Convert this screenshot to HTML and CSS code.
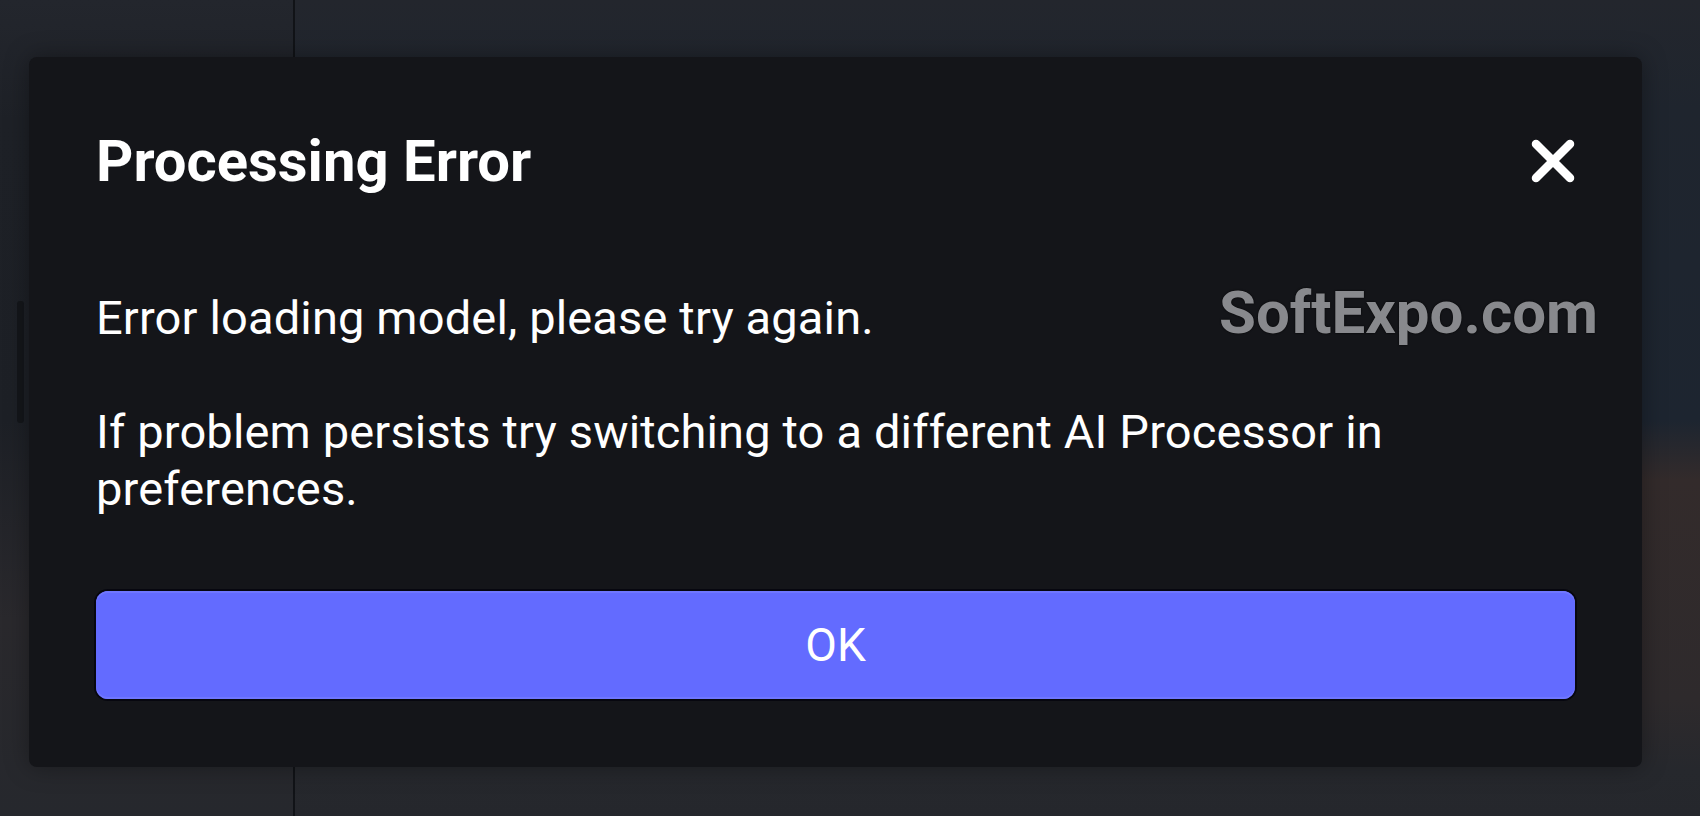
FILE: index.html
```html
<!DOCTYPE html>
<html lang="en">
<head>
<meta charset="utf-8">
<title>Processing Error</title>
<link rel="stylesheet" href="styles.css">
</head>
<body>
<div class="app">
  <aside class="sidebar"><div class="scroll-thumb"></div></aside>
  <main class="workspace"></main>
</div>
<div class="overlay">
  <div class="dialog" role="dialog" aria-labelledby="dlg-title">
    <div class="dialog-header">
      <h2 class="dialog-title" id="dlg-title">Processing Error</h2>
      <button class="close-btn" aria-label="Close">
        <svg viewBox="0 0 44 44" width="44" height="44" aria-hidden="true">
          <path d="M5 5 L39 39 M39 5 L5 39" stroke="#ffffff" stroke-width="8.5" stroke-linecap="round" fill="none"/>
        </svg>
      </button>
    </div>
    <div class="dialog-body">
      <p>Error loading model, please try again.</p>
      <p>If problem persists try switching to a different AI Processor in preferences.</p>
    </div>
    <button class="ok-btn">OK</button>
  </div>
</div>
<div class="watermark">SoftExpo.com</div>
</body>
</html>
```

FILE: styles.css
```css
* { box-sizing: border-box; }
html, body { margin: 0; height: 100%; }
body {
  font-family: Roboto, "Liberation Sans", sans-serif;
  background: #23262d;
  overflow: hidden;
  position: relative;
}
.app { display: flex; height: 100vh; }
.sidebar {
  width: 295px;
  flex: none;
  background: linear-gradient(to bottom, #23262d 0, #1e2127 120px, #1d2026 420px, #2a292d 620px, #26282d 100%);
  border-right: 2px solid #111317;
  padding: 301px 0 0 17px;
}
.scroll-thumb { width: 7px; height: 122px; background: #14161a; border-radius: 3px; }
.workspace {
  flex: 1;
  background: linear-gradient(to bottom, #23262d 0, #1f252e 110px, #1d2530 420px, #332b2b 480px, #2e2a2c 700px, #26282d 770px, #25272c 100%);
}
.overlay { position: absolute; inset: 0; padding: 57px 58px 49px 29px; }
.dialog {
  height: 710px;
  background: #141519;
  border-radius: 8px;
  padding: 70px 67px 68px;
  box-shadow: 0 0 24px rgba(0, 0, 0, 0.35);
}
.dialog-header {
  display: flex;
  align-items: center;
  justify-content: space-between;
  height: 68px;
}
.dialog-title {
  margin: 0;
  font-size: 58px;
  font-weight: 700;
  line-height: 68px;
  color: #ffffff;
}
.close-btn {
  background: none;
  border: 0;
  padding: 0;
  width: 44px;
  height: 44px;
  display: flex;
  cursor: pointer;
}
.dialog-body {
  margin-top: 94px;
  font-size: 47px;
  letter-spacing: 0.15px;
  line-height: 57px;
  color: #ffffff;
}
.dialog-body p { margin: 0; }
.dialog-body p + p { margin-top: 57px; }
.ok-btn {
  display: block;
  width: 100%;
  height: 108px;
  margin-top: 74px;
  background: #636bff;
  border: 0;
  border-radius: 12px;
  color: #ffffff;
  font-family: inherit;
  font-size: 46px;
  font-weight: 400;
  box-shadow: 0 0 0 2px #07070f, inset 0 2px 0 #7077ff, inset 0 -2px 0 #7077ff;
  cursor: pointer;
}
.watermark {
  position: absolute;
  left: 1219px;
  top: 277px;
  font-size: 60px;
  font-weight: 700;
  color: #88898d;
  text-shadow: 0 0 2px #000000;
  pointer-events: none;
}
```
